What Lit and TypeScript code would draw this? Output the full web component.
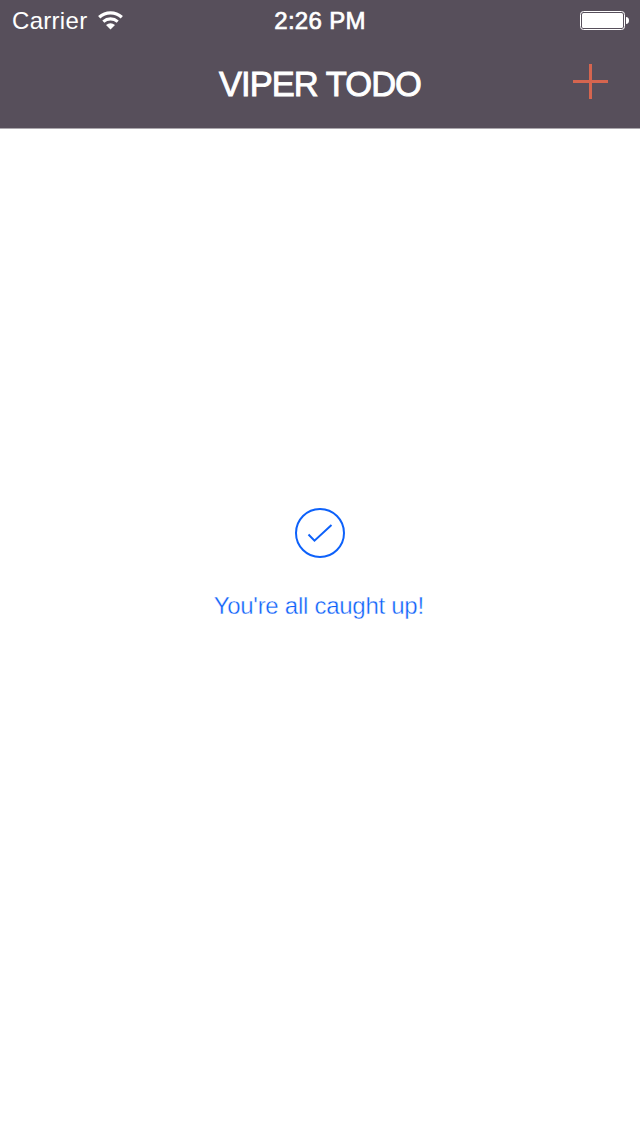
import { LitElement, html, css } from "lit";
import { customElement } from "lit/decorators.js";

@customElement("app-root")
export class AppRoot extends LitElement {
  static styles = css`
    :host {
      display: flex;
      flex-direction: column;
      height: 1136px;
      background: #fff;
      font-family: "Liberation Sans", Arial, sans-serif;
      overflow: hidden;
    }
    svg {
      display: block;
    }
    .header {
      box-sizing: border-box;
      height: 129px;
      background: #574f5b;
      border-bottom: 1px solid #aba7ad;
      color: #fff;
      flex: none;
    }
    .status,
    .nav {
      display: grid;
      grid-template-columns: 1fr auto 1fr;
      align-items: center;
    }
    .status {
      height: 40px;
      line-height: 40px;
      font-size: 24px;
    }
    .carrier {
      display: flex;
      align-items: center;
      gap: 11px;
      padding: 1px 0 0 12px;
      letter-spacing: 0.3px;
    }
    .wifi {
      margin-bottom: 2px;
    }
    .time {
      padding-top: 1px;
      letter-spacing: 0.3px;
      -webkit-text-stroke: 0.7px #fff;
    }
    .battery {
      justify-self: end;
      padding-right: 10px;
    }
    .nav {
      height: 88px;
    }
    .title {
      grid-column: 2;
      margin: 0;
      font-size: 34.5px;
      font-weight: 400;
      line-height: 88px;
      letter-spacing: -0.95px;
      -webkit-text-stroke: 0.9px #fff;
    }
    .add {
      justify-self: end;
      margin: 0 32px 5px 0;
      padding: 0;
      border: 0;
      background: none;
    }
    .empty {
      flex: 1;
      display: flex;
      flex-direction: column;
      align-items: center;
      padding-top: 378px;
    }
    .message {
      margin: 31px 2.5px 0 0;
      font-size: 24px;
      line-height: 32px;
      letter-spacing: -0.27px;
      color: #0d61fa;
      -webkit-text-stroke: 0.4px #fff;
    }
  `;

  render() {
    return html`
      <header class="header">
        <div class="status">
          <div class="carrier">
            <span>Carrier</span>
            <svg class="wifi" width="26" height="20" viewBox="0 0 26 20" fill="none" stroke="#fff">
              <path d="M1.2 7.2A17 17 0 0 1 23.8 7.2" stroke-width="3.3" />
              <path d="M5.3 11.6A11 11 0 0 1 19.7 11.6" stroke-width="3.1" />
              <path d="M8 15Q12.5 11.4 17 15L12.5 19.4Z" fill="#fff" stroke="none" />
            </svg>
          </div>
          <div class="time">2:26 PM</div>
          <svg class="battery" width="50" height="20" viewBox="0 0 50 20">
            <rect x="0.5" y="0.5" width="44" height="18" rx="3" fill="none" stroke="#fff" />
            <rect x="2" y="2" width="41" height="15" rx="1.5" fill="#fff" />
            <path d="M46 6Q49 6.3 49 9.5T46 13Z" fill="#fff" />
          </svg>
        </div>
        <div class="nav">
          <h1 class="title">VIPER TODO</h1>
          <button class="add" aria-label="Add">
            <svg width="35" height="35" viewBox="0 0 35 35">
              <path d="M16 0h3v16h16v3H19v16h-3V19H0v-3h16z" fill="#d5654f" />
            </svg>
          </button>
        </div>
      </header>
      <main class="empty">
        <svg width="52" height="52" viewBox="0 0 52 52" fill="none" stroke="#0d61fa" stroke-width="2">
          <circle cx="26" cy="26" r="24" />
          <path d="M14.5 27.5L20.5 33.7L37.5 18" />
        </svg>
        <p class="message">You're all caught up!</p>
      </main>
    `;
  }
}
